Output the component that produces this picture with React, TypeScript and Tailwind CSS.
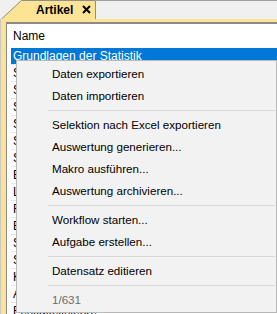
import React from "react";

const rows = [
  "Grundlagen der Statistik",
  "Statistik für Anfänger",
  "Soziologie heute",
  "Sprachwissenschaft",
  "Systemtheorie",
  "Stochastik kompakt",
  "Signalverarbeitung",
  "Einführung in die BWL",
  "Lineare Algebra",
  "Finanzmathematik",
  "Elektrotechnik",
  "Spieltheorie",
  "Softwaretechnik",
  "Kostenrechnung",
  "Analysis I",
  "Festigkeitslehre",
];

type MenuEntry = { label: string; disabled?: boolean } | "sep";

const menu: MenuEntry[] = [
  { label: "Daten exportieren" },
  { label: "Daten importieren" },
  "sep",
  { label: "Selektion nach Excel exportieren" },
  { label: "Auswertung generieren..." },
  { label: "Makro ausführen..." },
  { label: "Auswertung archivieren..." },
  "sep",
  { label: "Workflow starten..." },
  { label: "Aufgabe erstellen..." },
  "sep",
  { label: "Datensatz editieren" },
  "sep",
  { label: "1/631", disabled: true },
];

function Tab() {
  return (
    <div className="relative flex h-[19px] w-[95px] items-center pl-[35px]">
      <svg className="absolute inset-0" width="95" height="19" viewBox="0 0 95 19">
        <path d="M0 19 L20 0 H94.5 V19 Z" fill="#fde394" />
        <path d="M0.5 19 L20.5 0.5 H94.5 V19" fill="none" stroke="#8e8e8e" strokeWidth="1" />
      </svg>
      <span className="relative text-[12px] font-bold leading-none">Artikel</span>
      <svg className="relative ml-[9px]" width="9" height="9" viewBox="0 0 9 9">
        <path d="M1 1 L8 8 M8 1 L1 8" stroke="#000" strokeWidth="1.9" />
      </svg>
    </div>
  );
}

export default function App() {
  return (
    <div className="relative flex h-[314px] w-[277px] flex-col overflow-hidden bg-[#f0f0f0] font-['Liberation_Sans',Arial,sans-serif] text-[12px] text-black">
      <div className="flex h-[21px] items-end pl-[1px]">
        <Tab />
        <div className="h-full flex-1 border-t border-[#a0a0a0]" />
      </div>

      <div className="flex flex-1 flex-col border-l border-[#c8c8c8] bg-[#fde394] pl-[5px] pt-[3px]">
        <div className="flex-1 border-l border-t-2 border-[#8a8a8a] bg-white">
          <div className="flex h-[24px] items-center pl-[6px]">Name</div>
          {rows.map((r, i) => (
            <div
              key={r}
              className={
                i === 0
                  ? "ml-[4px] h-[17px] border-b border-[#e8e8e8] bg-[#0078d7] pl-[2px] leading-[16px] text-white"
                  : "ml-[4px] h-[17px] border-b border-[#e8e8e8] pl-[2px] leading-[16px]"
              }
            >
              {r}
            </div>
          ))}
        </div>
      </div>

      {/* context menu */}
      <div className="absolute left-[16px] top-[60px] flex h-[253px] w-[261px] flex-col border border-[#b9b9b9] bg-[#f2f2f2] pt-[2px] text-[11.6px]">
        {menu.map((m, i) =>
          m === "sep" ? (
            <div key={i} className="flex h-[7px] items-center pl-[31px] pr-[1px]">
              <div className="h-px w-full bg-[#d7d7d7]" />
            </div>
          ) : (
            <div
              key={i}
              className={
                m.disabled
                  ? "flex h-[22px] items-center pl-[35px] text-[#6d6d6d]"
                  : "flex h-[22px] items-center pl-[35px]"
              }
            >
              {m.label}
            </div>
          )
        )}
      </div>
    </div>
  );
}
